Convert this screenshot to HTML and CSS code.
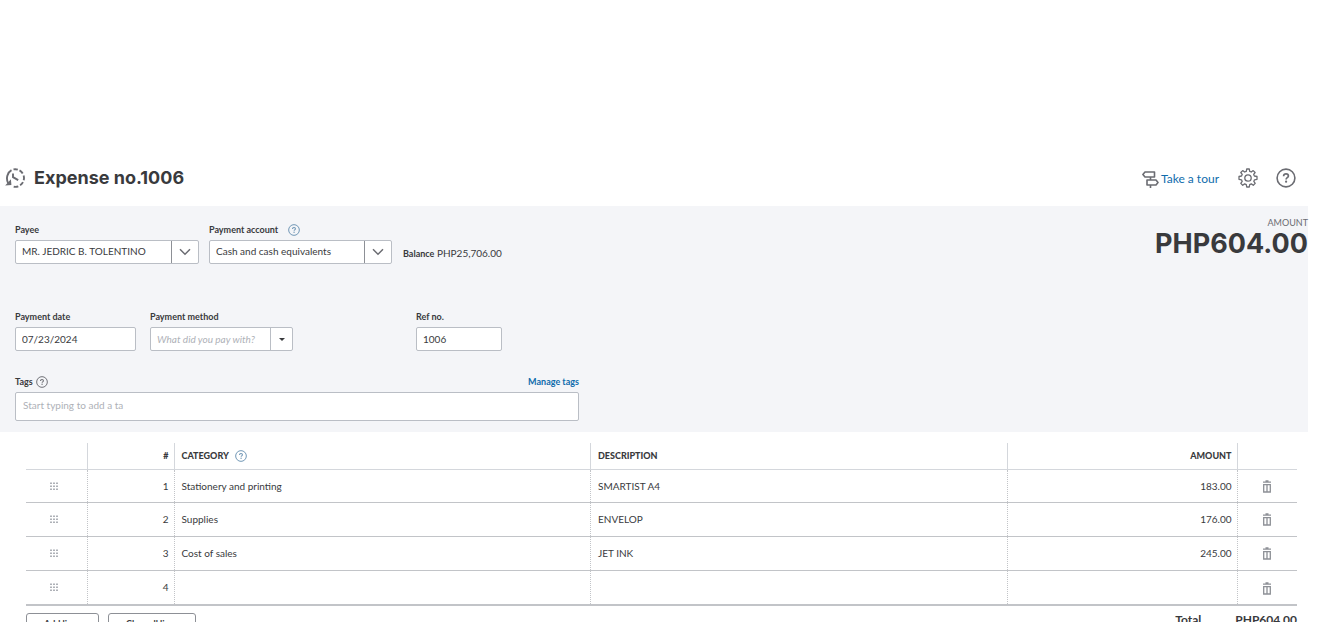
FILE: index.html
```html
<!DOCTYPE html>
<html lang="en">
<head>
<meta charset="utf-8">
<title>Expense no.1006</title>
<link rel="stylesheet" href="styles.css">
</head>
<body>
<svg class="defs" aria-hidden="true">
  <symbol id="help" viewBox="0 0 20 20"><circle cx="10" cy="10" r="8.9" fill="none" stroke="currentColor" stroke-width="1.6"/><path d="M7.6 8.2c0-1.5 1-2.3 2.4-2.3s2.4.8 2.4 2.1c0 1.600-2.300 1.700-2.300 3.400" fill="none" stroke="currentColor" stroke-width="1.700"/><circle cx="10.100" cy="13.700" r="1.100" fill="currentColor"/></symbol>
  <symbol id="chevron" viewBox="0 0 12 8"><path d="M1 1.200l5 5 5-5" fill="none" stroke="currentColor" stroke-width="1.500"/></symbol>
  <symbol id="grip" viewBox="0 0 8 8"><path d="M0 .5h2v1.500H0zM3 .5h2v1.500H3zM6 .5h2v1.500H6zM0 3.500h2V5H0zM3 3.500h2V5H3zM6 3.500h2V5H6zM0 6.500h2V8H0zM3 6.500h2V8H3zM6 6.500h2V8H6z" fill="currentColor"/></symbol>
  <symbol id="trash" viewBox="0 0 10 13"><path d="M3.500 .8h3M1 2.200h8" fill="none" stroke="currentColor" stroke-width="1.200"/><path d="M1.700 4.700v7.300h6.600V4.700zM5 4.500V12" fill="none" stroke="currentColor" stroke-width="1.300"/></symbol>
</svg>
<header class="topbar">
  <svg class="history" viewBox="0 0 20 20" fill="none" stroke="currentColor" stroke-width="1.900"><path d="M3.200 15.200C.6 10.500 2.400 4.500 6.500 2.200M8.500 1.400c1.500-.3 3-.2 4.300.2M14.500 2.300c1.500.8 2.500 1.900 3.200 3.200M18.600 7.500c.5 1.600.5 3.200.1 4.700M18 14.100c-.7 1.300-1.700 2.400-2.900 3.200M13.300 18.300c-1.500.6-3 .7-4.600.4M8 5.500v3.600l5.200 3"/><path d="M.2 17.500l6.200-.5-.5-5.800z" fill="currentColor" stroke="none"/></svg>
  <h1 class="title">Expense no.1006</h1>
  <a class="tour" href="#">
    <svg class="sign" viewBox="0 0 17 17" fill="none" stroke="currentColor" stroke-width="1.600" stroke-linejoin="round"><path d="M3 1h9.500v5H3L.9 3.500zM5 9h9l2 2.500-2 2.500H5zM8.500 6v3M8.500 14v3"/></svg>
    <span>Take a tour</span>
  </a>
  <button class="icon-btn" type="button" aria-label="Settings">
    <svg class="large" viewBox="0 0 20 20" fill="none" stroke="currentColor" stroke-width="1.300" stroke-linejoin="round"><circle cx="10" cy="10" r="3.200"/><path d="M8.700 1h2.600l.4 2.300 1.600.7 1.900-1.400 1.900 1.900L15.700 6.400l.7 1.600 2.600.5v2.800l-2.500.5-.7 1.600 1.400 2-1.900 1.900-2-1.400-1.600.7-.4 2.400H8.700l-.4-2.400-1.600-.7-2 1.400-1.900-1.900 1.400-2-.7-1.600L1 11.300V8.500L3.500 8l.7-1.600L2.800 4.500l1.900-1.900L6.600 4l1.700-.7z"/></svg>
  </button>
  <button class="icon-btn" type="button" aria-label="Help"><svg class="large"><use href="#help"/></svg></button>
</header>
<main>
  <form class="panel">
    <div class="fields">
      <div class="row accounts">
        <div class="field payee">
          <label for="payee">Payee</label>
          <div class="combo"><select id="payee"><option>MR. JEDRIC B. TOLENTINO</option></select><span class="arrow"><svg class="chevron"><use href="#chevron"/></svg></span></div>
        </div>
        <div class="field account">
          <div class="label-row"><label for="account">Payment account</label><svg class="small info"><use href="#help"/></svg></div>
          <div class="combo"><select id="account"><option>Cash and cash equivalents</option></select><span class="arrow"><svg class="chevron"><use href="#chevron"/></svg></span></div>
        </div>
        <p class="balance"><b>Balance</b> PHP25,706.00</p>
      </div>
      <div class="row details">
        <div class="field date"><label for="date">Payment date</label><input id="date" type="text" value="07/23/2024"></div>
        <div class="field method">
          <label for="method">Payment method</label>
          <div class="combo"><select id="method" class="empty"><option>What did you pay with?</option></select><span class="arrow"><span class="caret"></span></span></div>
        </div>
        <div class="field ref"><label for="ref">Ref no.</label><input id="ref" type="text" value="1006"></div>
      </div>
      <div class="field tags">
        <div class="label-row"><label for="tags">Tags</label><svg class="small"><use href="#help"/></svg><a class="manage" href="#">Manage tags</a></div>
        <input id="tags" type="text" placeholder="Start typing to add a ta">
      </div>
    </div>
    <div class="amount"><span class="amount-label">AMOUNT</span><strong class="amount-value">PHP604.00</strong></div>
  </form>
  <section class="lines">
    <table>
      <colgroup><col class="c-grip"><col class="c-num"><col><col><col class="c-amount"><col class="c-del"></colgroup>
      <thead><tr><th></th><th class="num">#</th><th><span class="head">CATEGORY <svg class="small info"><use href="#help"/></svg></span></th><th>DESCRIPTION</th><th class="num">AMOUNT</th><th></th></tr></thead>
      <tbody>
        <tr><td class="handle"><svg class="grip"><use href="#grip"/></svg></td><td class="num">1</td><td>Stationery and printing</td><td>SMARTIST A4</td><td class="num">183.00</td><td class="mid"><button class="del" type="button" aria-label="Delete line 1"><svg class="trash"><use href="#trash"/></svg></button></td></tr>
        <tr><td class="handle"><svg class="grip"><use href="#grip"/></svg></td><td class="num">2</td><td>Supplies</td><td>ENVELOP</td><td class="num">176.00</td><td class="mid"><button class="del" type="button" aria-label="Delete line 2"><svg class="trash"><use href="#trash"/></svg></button></td></tr>
        <tr><td class="handle"><svg class="grip"><use href="#grip"/></svg></td><td class="num">3</td><td>Cost of sales</td><td>JET INK</td><td class="num">245.00</td><td class="mid"><button class="del" type="button" aria-label="Delete line 3"><svg class="trash"><use href="#trash"/></svg></button></td></tr>
        <tr><td class="handle"><svg class="grip"><use href="#grip"/></svg></td><td class="num">4</td><td></td><td></td><td></td><td class="mid"><button class="del" type="button" aria-label="Delete line 4"><svg class="trash"><use href="#trash"/></svg></button></td></tr>
      </tbody>
    </table>
    <div class="footer">
      <button class="btn" type="button">Add lines</button>
      <button class="btn" type="button">Clear all lines</button>
      <div class="total"><span>Total</span><span>PHP604.00</span></div>
    </div>
  </section>
</main>
</body>
</html>
```
FILE: styles.css
```css
* { box-sizing: border-box; }
html { scrollbar-width: none; }
body {
  margin: 0;
  padding: 160px 12px 0 0;
  background: #fff;
  color: #393a3d;
  font: 10px/14px Lato, "Open Sans", sans-serif;
}
.defs { display: none; }
svg { flex: none; }
a { color: #0f6cac; text-decoration: none; }
button, input, select { font: inherit; color: inherit; }
button { background: none; border: 0; padding: 0; }

.topbar { display: flex; align-items: center; height: 46px; padding: 0 12px 10px 5px; color: #6b6c72; }
.history { width: 20px; height: 20px; }
.title { margin: 0 auto 0 9px; font: 700 18px/24px Inter, sans-serif; color: #393a3d; }
.tour { display: flex; align-items: center; gap: 2px; margin-right: 19px; padding-top: 2px; font-size: 12px; }
.sign { width: 17px; height: 17px; color: #6b6c72; }
.icon-btn { display: flex; margin-left: 18px; color: inherit; }
.icon-btn:first-of-type { margin-left: 0; }
.large { width: 20px; height: 20px; }

.panel { display: flex; justify-content: space-between; padding: 11px 0 11px 15px; background: #f4f5f8; }
.fields { flex: 0 1 564px; padding-top: 6px; }
.row { display: flex; align-items: flex-end; }
.field label, .label-row { font-weight: 700; font-size: 9px; line-height: 14px; }
.field > label { display: block; }
.field > label, .label-row { margin-bottom: 3px; }
.label-row { display: flex; align-items: center; }
.field input, .combo select {
  display: block;
  width: 100%;
  height: 24px;
  padding: 0 6px;
  border: 1px solid #babec5;
  border-radius: 2px;
  background: #fff;
  appearance: none;
}
.combo { position: relative; }
.accounts select { padding-bottom: 2px; }
.arrow {
  position: absolute;
  inset: 1px 1px 1px auto;
  display: flex;
  align-items: center;
  justify-content: center;
  width: 27px;
  border-left: 1px solid #8d9096;
  pointer-events: none;
}
.chevron { width: 12px; height: 8px; color: #6b6c72; }
.small { width: 12px; height: 12px; color: #6b6c72; }
.info { color: #6c93b3; }
.payee { width: 184px; margin-right: 10px; }
.account { width: 183px; margin-right: 11px; }
.account .info { margin-left: 10px; }
.balance { margin: 0 0 3px; }
.balance b { font-size: 9px; }
.details { margin-top: 46px; }
.date { width: 121px; margin-right: 14px; }
.method { width: 143px; margin-right: 123px; }
.method .arrow { width: 22px; border-color: #babec5; }
.combo .empty { color: #aeb1b7; font-style: italic; }
.caret { border: 3px solid transparent; border-top: 3px solid #393a3d; border-bottom: 0; }
.ref { width: 86px; }
.tags { margin-top: 24px; }
.tags .small { margin-left: 3px; }
.tags input { height: 29px; padding: 0 7px 4px; }
.tags input::placeholder { color: #aeb1b7; }
.manage { margin-left: auto; }
.amount { display: flex; flex-direction: column; align-items: flex-end; color: #393a3d; }
.amount-label { font-size: 9px; line-height: 12px; color: #6b6c72; }
.amount-value { font: 700 27px/30px Inter, sans-serif; }

.lines { padding: 11px 11px 0 26px; }
table { width: 100%; border-collapse: collapse; table-layout: fixed; border-bottom: 2px solid #c2c4c8; }
.c-grip { width: 61px; }
.c-num { width: 87px; }
.c-amount { width: 230px; }
.c-del { width: 60px; }
th { height: 26px; padding: 0 6px 0 7px; text-align: left; font-size: 9px; font-weight: 900; border-bottom: 1px solid #d4d7dc; }
th + th { border-left: 1px solid #d4d7dc; }
td { height: 34px; padding: 0 6px 0 7px; border-bottom: 1px solid #c2c4c8; }
tbody tr:first-child td { height: 33px; }
tbody tr:last-child td { height: 35px; }
td + td { border-left: 1px dotted #c2c4c8; }
th.num, td.num { text-align: right; padding-right: 5px; }
td.mid { text-align: center; padding: 0; }
td.handle { padding: 0 0 0 24px; }
.head { display: flex; align-items: center; gap: 6px; }
.grip { display: block; width: 8px; height: 8px; color: #aeb1b7; }
.del { color: #8d9096; vertical-align: middle; }
.trash { display: block; width: 10px; height: 13px; }
.footer { display: flex; gap: 9px; padding-top: 7px; }
.btn { height: 22px; padding: 0 17px; border: 1px solid #8d9096; border-radius: 3px; font-size: 9px; font-weight: 700; }
.total { display: flex; gap: 34px; margin-left: auto; font-size: 12px; font-weight: 700; }
```
